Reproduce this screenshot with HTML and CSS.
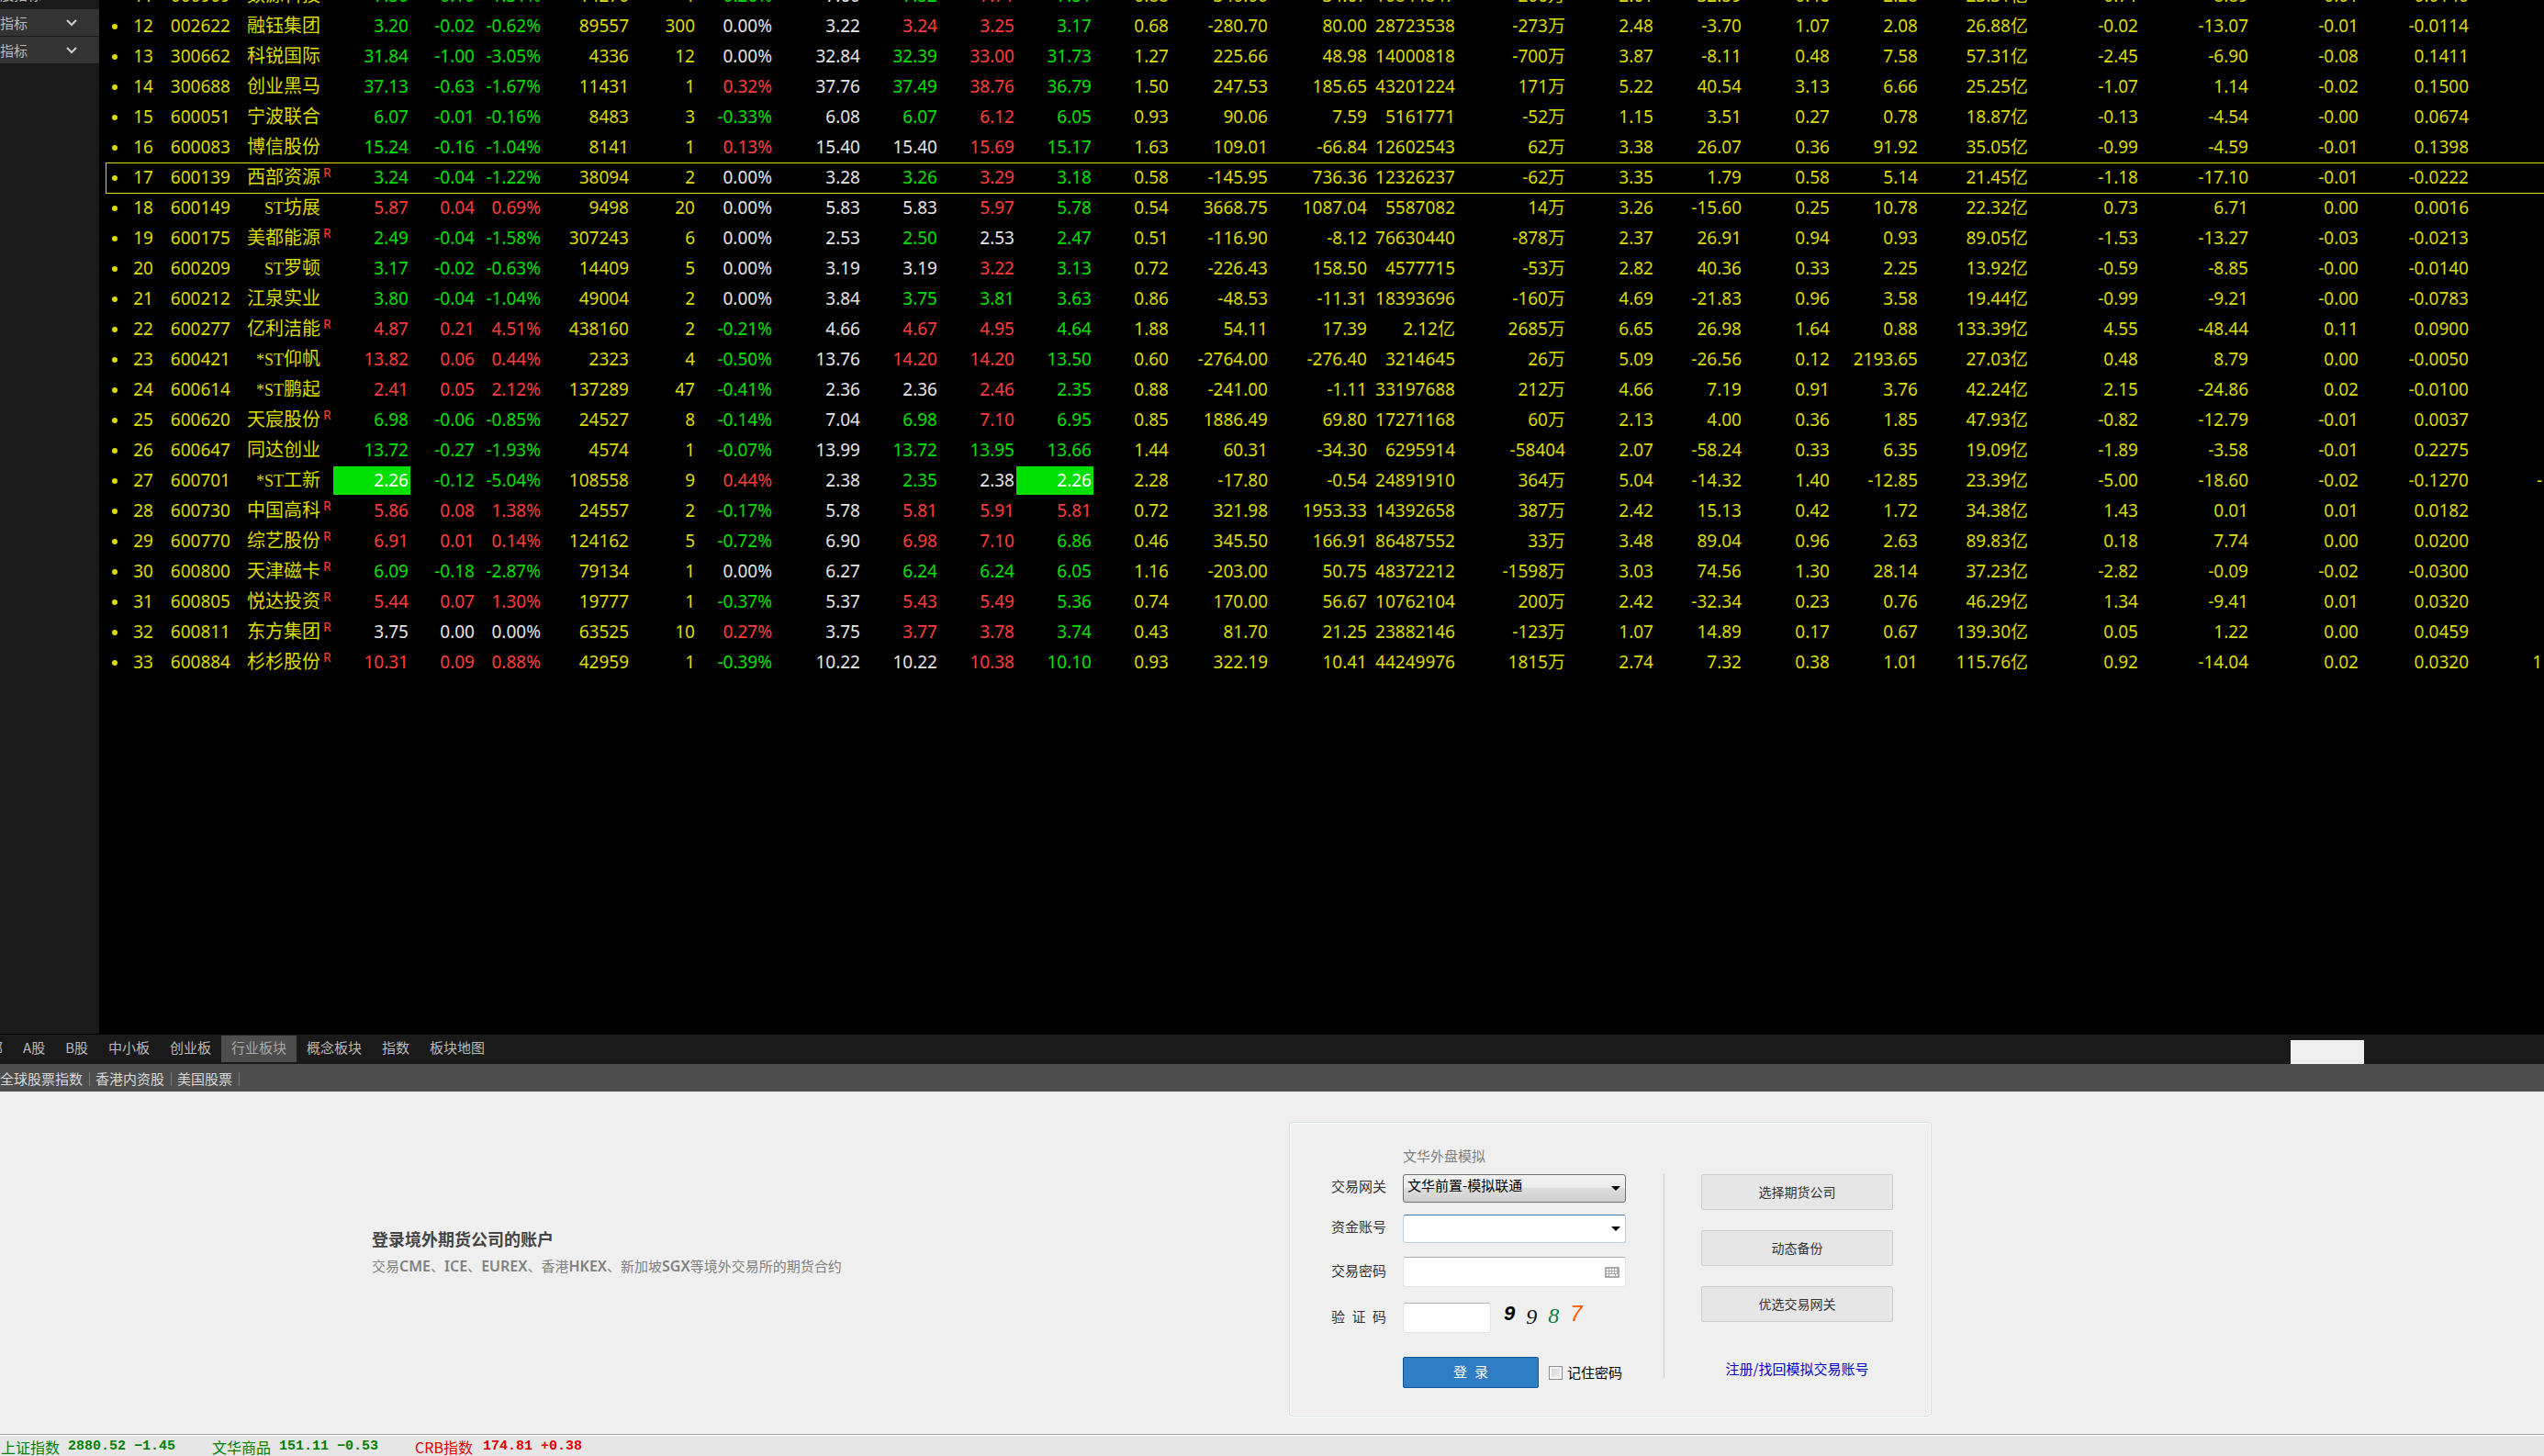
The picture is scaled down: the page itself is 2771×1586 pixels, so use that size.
FILE: index.html
```html
<!DOCTYPE html>
<html lang="zh-CN">
<head>
<meta charset="utf-8">
<title>行业板块</title>
<link rel="stylesheet" href="styles.css">
</head>
<body>
<main class="workspace">
  <aside class="sidebar">
    <div class="side-heading">股指标</div>
    <button class="side-item" type="button"><span>指标</span><svg class="chevron" viewBox="0 0 12 8"><path d="M1 1l5 5 5-5"/></svg></button>
    <button class="side-item" type="button"><span>指标</span><svg class="chevron" viewBox="0 0 12 8"><path d="M1 1l5 5 5-5"/></svg></button>
  </aside>
  <section class="board">
    <table class="quotes">
      <colgroup>
        <col class="w20"><col class="w34"><col class="w84"><col class="w98"><col class="w12"><col class="w84">
        <col class="w72"><col class="w72"><col class="w96"><col class="w72"><col class="w84"><col class="w96">
        <col class="w84"><col class="w84"><col class="w84"><col class="w84"><col class="w108"><col class="w108">
        <col class="w96"><col class="w120"><col class="w96"><col class="w96"><col class="w96"><col class="w96">
        <col class="w120"><col class="w120"><col class="w120"><col class="w120"><col class="w120"><col>
      </colgroup>
      <tbody id="quotes"></tbody>
    </table>
  </section>
</main>
<nav class="tabs">
  <div class="tab-list">
    <button type="button" class="tab">全部</button>
    <button type="button" class="tab">A股</button>
    <button type="button" class="tab">B股</button>
    <button type="button" class="tab">中小板</button>
    <button type="button" class="tab">创业板</button>
    <button type="button" class="tab active">行业板块</button>
    <button type="button" class="tab">概念板块</button>
    <button type="button" class="tab">指数</button>
    <button type="button" class="tab">板块地图</button>
  </div>
  <div class="tab-blank"></div>
</nav>
<nav class="markets">
  <a href="#">全球股票指数</a>
  <a href="#">香港内资股</a>
  <a href="#">美国股票</a>
</nav>
<section class="login">
  <div class="intro">
    <h1>登录境外期货公司的账户</h1>
    <p>交易<b>CME</b>、<b>ICE</b>、<b>EUREX</b>、香港<b>HKEX</b>、新加坡<b>SGX</b>等境外交易所的期货合约</p>
  </div>
  <div class="card">
    <form class="form">
      <div class="form-title">文华外盘模拟</div>
      <label for="gateway">交易网关</label>
      <div class="field">
        <select id="gateway" class="gateway"><option>文华前置-模拟联通</option></select>
        <svg class="arrow" viewBox="0 0 10 5"><path d="M0 0h10L5 5z"/></svg>
      </div>
      <label for="account">资金账号</label>
      <div class="field">
        <input id="account" class="account" type="text">
        <svg class="arrow" viewBox="0 0 10 5"><path d="M0 0h10L5 5z"/></svg>
      </div>
      <label for="password" class="tall">交易密码</label>
      <div class="field">
        <input id="password" class="text" type="password">
        <svg class="keyboard" viewBox="0 0 16 12"><rect width="16" height="12" rx="1" fill="#aaa"/><path d="M2 3h12M2 6h12" stroke="#fff" stroke-width="2" stroke-dasharray="2 1"/><path d="M2 9h2M5 9h6M12 9h2" stroke="#fff" stroke-width="2"/></svg>
      </div>
      <label for="code" class="tall spread"><span>验</span><span>证</span><span>码</span></label>
      <div class="field code-row">
        <input id="code" class="text code" type="text">
        <div class="captcha"><span class="c1">9</span><span class="c2">9</span><span class="c3">8</span><span class="c4">7</span></div>
      </div>
      <div class="submit-row">
        <button type="submit" class="submit"><span>登</span><span>录</span></button>
        <label class="remember"><input type="checkbox">记住密码</label>
      </div>
    </form>
    <div class="actions">
      <button type="button">选择期货公司</button>
      <button type="button">动态备份</button>
      <button type="button">优选交易网关</button>
      <a href="#">注册/找回模拟交易账号</a>
    </div>
  </div>
</section>
<footer class="status">
  <div class="index down"><span>上证指数</span><b>2880.52</b><b>−1.45</b></div>
  <div class="index down"><span>文华商品</span><b>151.11</b><b>−0.53</b></div>
  <div class="index up"><span class="wide">CRB指数</span><b>174.81</b><b>+0.38</b></div>
</footer>
<script src="quotes.js"></script>
</body>
</html>
```
FILE: styles.css
```css
* { box-sizing: border-box; }
body {
  margin: 0;
  height: 100vh;
  display: flex;
  flex-direction: column;
  overflow: hidden;
  background: #efefef;
  font: 15px/20px "Noto Sans CJK SC", sans-serif;
}
button, input, select { font: inherit; margin: 0; }
button { cursor: pointer; }

/* quote board */
.workspace {
  flex: 1 1 0;
  min-height: 0;
  display: flex;
  overflow: hidden;
  background: #000;
}
.sidebar {
  flex: none;
  width: 108px;
  margin-bottom: 1px;
  background: #1a1a1a;
  color: #bbb;
  overflow: hidden;
}
.side-heading {
  height: 20px;
  margin-top: -14px;
  margin-bottom: 4px;
  line-height: 16px;
}
.side-item {
  display: flex;
  align-items: center;
  width: 100%;
  height: 29px;
  margin-bottom: 1px;
  padding: 0;
  border: 0;
  background: #333;
  color: #bbb;
}
.side-item span { width: 72px; text-align: left; }
.chevron {
  width: 12px;
  height: 8px;
  fill: none;
  stroke: #ccc;
  stroke-width: 2;
}
.board { flex: 1; min-width: 0; padding-left: 7px; overflow: hidden; }
.quotes {
  width: 100%;
  margin-top: -21px;
  table-layout: fixed;
  border-collapse: separate;
  border-spacing: 0;
  font: 19px/31px "Noto Sans", "Noto Sans CJK SC", sans-serif;
  color: #dcdc00;
}
.w12 { width: 12px; } .w20 { width: 20px; } .w34 { width: 34px; } .w72 { width: 72px; }
.w84 { width: 84px; } .w96 { width: 96px; } .w98 { width: 98px; }
.w108 { width: 108px; } .w120 { width: 120px; }
.quotes td {
  height: 33px;
  padding: 1px 2px 1px 0;
  text-align: right;
  white-space: nowrap;
  vertical-align: top;
}
.quotes td > span { display: block; height: 31px; padding-right: 2px; margin-right: -2px; }
.quotes .name { font-family: "Liberation Serif", "Noto Sans CJK SC", serif; font-size: 20px; }
.quotes .name small { font-size: 18px; }
.quotes .flag { padding: 2px 0 0 1px; font-size: 14px; line-height: 18px; text-align: left; color: #ff3c3c; }
.quotes .dot { text-align: center; padding: 14px 0 0; }
.quotes .dot i { display: block; width: 6px; height: 6px; margin: 0 auto; border-radius: 3px; background: #dcdc00; }
.quotes .up { color: #ff3c3c; }
.quotes .down { color: #00e000; }
.quotes .flat { color: #e6e6e6; }
.quotes .limit span { background: #00e000; color: #fff; }
.quotes .selected td { box-shadow: inset 0 1px #dcdc00, 0 1px #dcdc00; }
.quotes .selected .dot { box-shadow: inset 0 1px #dcdc00, 0 1px #dcdc00, inset 1px 0 #dcdc00; }

/* tab bars */
.tabs {
  flex: none;
  display: flex;
  justify-content: space-between;
  height: 32px;
  padding-right: 196px;
  background: #1a1a1a;
  overflow: hidden;
}
.tab-list { display: flex; margin-left: -38px; padding: 1px 0 2px; }
.tab {
  padding: 0 11px 3px;
  border: 0;
  background: none;
  color: #bbb;
  line-height: 24px;
  white-space: nowrap;
}
.tab.active { background: #4d4d4d; color: #aaa; }
.tab-blank { width: 80px; margin-top: 6px; background: #efefef; }
.markets {
  flex: none;
  display: flex;
  align-items: center;
  height: 30px;
  padding-top: 2px;
  background: #4d4d4d;
}
.markets a {
  height: 15px;
  margin-right: 6px;
  padding-right: 7px;
  border-right: 1px solid #777;
  color: #d8d8d8;
  line-height: 14px;
  text-decoration: none;
}

/* login */
.login {
  flex: none;
  display: grid;
  grid-template-columns: 1fr 700px;
  padding: 33px 667px 19px 405px;
}
.intro { padding-top: 114px; }
.intro h1 { margin: 0 0 7px; font-size: 18px; line-height: 26px; color: #444; }
.intro p { margin: 0; color: #808080; }
.intro b { font: 600 16px/20px "Noto Sans", sans-serif; }
.card {
  display: flex;
  height: 321px;
  padding: 24px 0 0 45px;
  border: 1px solid #d5dfe5;
  border-radius: 4px;
  box-shadow: inset 0 0 0 1px #fff, 0 1px #fff;
  color: #333;
}
.form {
  display: grid;
  grid-template-columns: 60px 243px;
  grid-template-rows: 32px 44px 46px 50px 59px 34px;
  column-gap: 18px;
  align-items: start;
}
.form > label { line-height: 26px; }
.form > .tall { line-height: 30px; }
.form-title { grid-column: 2; line-height: 24px; color: #808080; }
.spread { display: flex; justify-content: space-between; }
.field { position: relative; }
.gateway, .account, .text { display: block; width: 100%; border-radius: 3px; outline: 0; }
.gateway {
  height: 31px;
  padding: 0 24px 8px 4px;
  appearance: none;
  border: 1px solid #707070;
  background: linear-gradient(#f2f2f2, #ebebeb 50%, #ddd 50%, #cfcfcf);
  color: #000;
}
.account { height: 31px; padding: 0 24px 0 4px; border: 1px solid #b5cfe7; border-top-color: #3d7bad; background: #fff; }
.text { height: 33px; padding: 0 4px; border: 1px solid #e2e3ea; border-top-color: #abadb3; background: #fff; }
.arrow { position: absolute; right: 6px; top: 13px; width: 10px; height: 5px; }
.keyboard { position: absolute; right: 7px; top: 11px; width: 16px; height: 12px; }
.code-row { display: flex; gap: 14px; }
.code-row .code { flex: none; width: 96px; }
.captcha { display: flex; gap: 12px; font: italic 24px/30px "Liberation Serif", serif; }
.c1 { font: italic bold 22px/24px "Liberation Sans", sans-serif; color: #000; }
.c2 { color: #111; }
.c3 { color: #108040; line-height: 28px; }
.c4 { font: italic 24px/24px "Liberation Sans", sans-serif; color: #ff5a00; }
.submit-row { grid-column: 2; display: flex; align-items: center; gap: 11px; }
.submit {
  display: flex;
  justify-content: center;
  gap: 8px;
  width: 148px;
  height: 34px;
  padding: 5px 0;
  border: 1px solid #0e5698;
  border-radius: 2px;
  background: #2f7dc3;
  color: #fff;
}
.remember { display: flex; align-items: center; gap: 5px; color: #000; white-space: nowrap; }
.remember input {
  appearance: none;
  width: 15px;
  height: 15px;
  border: 1px solid #8e8f8f;
  background: linear-gradient(135deg, #c8ccd2, #f6f6f6);
  box-shadow: inset 0 0 0 2px #f4f4f4;
}
.actions {
  display: flex;
  flex-direction: column;
  align-items: center;
  gap: 22px;
  height: 222px;
  margin: 32px 0 0 41px;
  padding-left: 40px;
  border-left: 1px solid #ccc;
}
.actions button {
  width: 209px;
  height: 39px;
  padding-bottom: 3px;
  border: 1px solid #ccc;
  border-radius: 2px;
  background: #e6e6e6;
  color: #333;
  font-size: 14px;
}
.actions a { margin-top: 19px; color: #0000c8; text-decoration: none; }

/* status bar */
.status {
  flex: none;
  display: flex;
  align-items: flex-end;
  gap: 40px;
  height: 24px;
  padding-left: 1px;
  border-top: 1px solid #a0a0a0;
  box-shadow: inset 0 1px #fff;
  background: #e6e6e6;
  font-size: 16px;
  line-height: 20px;
  overflow: hidden;
}
.index { display: flex; gap: 9px; white-space: nowrap; }
.index b { font: bold 15px/20px "Liberation Mono", monospace; }
.index.down { color: #008000; }
.index.up { color: #e00000; }
.wide { width: 65px; }
```
FILE: quotes.js
```js
// 序号 代码 名称 R标记 现价 涨跌 涨幅 总量 现量 涨速 昨收 今开 最高 最低 其余指标…
const data = `
11 000909 数源科技 - 7.50 -0.10 -1.31% 14270 1 -0.26% 7.60 7.52 7.71 7.51 0.88 -340.00 34.67 10844847 -206万 2.61 -32.59 0.46 2.28 23.31亿 -0.71 -8.89 -0.01 -0.0140
12 002622 融钰集团 - 3.20 -0.02 -0.62% 89557 300 0.00% 3.22 3.24 3.25 3.17 0.68 -280.70 80.00 28723538 -273万 2.48 -3.70 1.07 2.08 26.88亿 -0.02 -13.07 -0.01 -0.0114
13 300662 科锐国际 - 31.84 -1.00 -3.05% 4336 12 0.00% 32.84 32.39 33.00 31.73 1.27 225.66 48.98 14000818 -700万 3.87 -8.11 0.48 7.58 57.31亿 -2.45 -6.90 -0.08 0.1411
14 300688 创业黑马 - 37.13 -0.63 -1.67% 11431 1 0.32% 37.76 37.49 38.76 36.79 1.50 247.53 185.65 43201224 171万 5.22 40.54 3.13 6.66 25.25亿 -1.07 1.14 -0.02 0.1500
15 600051 宁波联合 - 6.07 -0.01 -0.16% 8483 3 -0.33% 6.08 6.07 6.12 6.05 0.93 90.06 7.59 5161771 -52万 1.15 3.51 0.27 0.78 18.87亿 -0.13 -4.54 -0.00 0.0674
16 600083 博信股份 - 15.24 -0.16 -1.04% 8141 1 0.13% 15.40 15.40 15.69 15.17 1.63 109.01 -66.84 12602543 62万 3.38 26.07 0.36 91.92 35.05亿 -0.99 -4.59 -0.01 0.1398
17 600139 西部资源 R 3.24 -0.04 -1.22% 38094 2 0.00% 3.28 3.26 3.29 3.18 0.58 -145.95 736.36 12326237 -62万 3.35 1.79 0.58 5.14 21.45亿 -1.18 -17.10 -0.01 -0.0222
18 600149 ST坊展 - 5.87 0.04 0.69% 9498 20 0.00% 5.83 5.83 5.97 5.78 0.54 3668.75 1087.04 5587082 14万 3.26 -15.60 0.25 10.78 22.32亿 0.73 6.71 0.00 0.0016
19 600175 美都能源 R 2.49 -0.04 -1.58% 307243 6 0.00% 2.53 2.50 2.53 2.47 0.51 -116.90 -8.12 76630440 -878万 2.37 26.91 0.94 0.93 89.05亿 -1.53 -13.27 -0.03 -0.0213
20 600209 ST罗顿 - 3.17 -0.02 -0.63% 14409 5 0.00% 3.19 3.19 3.22 3.13 0.72 -226.43 158.50 4577715 -53万 2.82 40.36 0.33 2.25 13.92亿 -0.59 -8.85 -0.00 -0.0140
21 600212 江泉实业 - 3.80 -0.04 -1.04% 49004 2 0.00% 3.84 3.75 3.81 3.63 0.86 -48.53 -11.31 18393696 -160万 4.69 -21.83 0.96 3.58 19.44亿 -0.99 -9.21 -0.00 -0.0783
22 600277 亿利洁能 R 4.87 0.21 4.51% 438160 2 -0.21% 4.66 4.67 4.95 4.64 1.88 54.11 17.39 2.12亿 2685万 6.65 26.98 1.64 0.88 133.39亿 4.55 -48.44 0.11 0.0900
23 600421 *ST仰帆 - 13.82 0.06 0.44% 2323 4 -0.50% 13.76 14.20 14.20 13.50 0.60 -2764.00 -276.40 3214645 26万 5.09 -26.56 0.12 2193.65 27.03亿 0.48 8.79 0.00 -0.0050
24 600614 *ST鹏起 - 2.41 0.05 2.12% 137289 47 -0.41% 2.36 2.36 2.46 2.35 0.88 -241.00 -1.11 33197688 212万 4.66 7.19 0.91 3.76 42.24亿 2.15 -24.86 0.02 -0.0100
25 600620 天宸股份 R 6.98 -0.06 -0.85% 24527 8 -0.14% 7.04 6.98 7.10 6.95 0.85 1886.49 69.80 17271168 60万 2.13 4.00 0.36 1.85 47.93亿 -0.82 -12.79 -0.01 0.0037
26 600647 同达创业 - 13.72 -0.27 -1.93% 4574 1 -0.07% 13.99 13.72 13.95 13.66 1.44 60.31 -34.30 6295914 -58404 2.07 -58.24 0.33 6.35 19.09亿 -1.89 -3.58 -0.01 0.2275
27 600701 *ST工新 - 2.26 -0.12 -5.04% 108558 9 0.44% 2.38 2.35 2.38 2.26 2.28 -17.80 -0.54 24891910 364万 5.04 -14.32 1.40 -12.85 23.39亿 -5.00 -18.60 -0.02 -0.1270 -
28 600730 中国高科 R 5.86 0.08 1.38% 24557 2 -0.17% 5.78 5.81 5.91 5.81 0.72 321.98 1953.33 14392658 387万 2.42 15.13 0.42 1.72 34.38亿 1.43 0.01 0.01 0.0182
29 600770 综艺股份 R 6.91 0.01 0.14% 124162 5 -0.72% 6.90 6.98 7.10 6.86 0.46 345.50 166.91 86487552 33万 3.48 89.04 0.96 2.63 89.83亿 0.18 7.74 0.00 0.0200
30 600800 天津磁卡 R 6.09 -0.18 -2.87% 79134 1 0.00% 6.27 6.24 6.24 6.05 1.16 -203.00 50.75 48372212 -1598万 3.03 74.56 1.30 28.14 37.23亿 -2.82 -0.09 -0.02 -0.0300
31 600805 悦达投资 R 5.44 0.07 1.30% 19777 1 -0.37% 5.37 5.43 5.49 5.36 0.74 170.00 56.67 10762104 200万 2.42 -32.34 0.23 0.76 46.29亿 1.34 -9.41 0.01 0.0320
32 600811 东方集团 R 3.75 0.00 0.00% 63525 10 0.27% 3.75 3.77 3.78 3.74 0.43 81.70 21.25 23882146 -123万 1.07 14.89 0.17 0.67 139.30亿 0.05 1.22 0.00 0.0459
33 600884 杉杉股份 R 10.31 0.09 0.88% 42959 1 -0.39% 10.22 10.22 10.38 10.10 0.93 322.19 10.41 44249976 1815万 2.74 7.32 0.38 1.01 115.76亿 0.92 -14.04 0.02 0.0320 1
`;
const SELECTED = '600139';
const LIMIT = -5;
const tone = n => n > 0 ? 'up' : n < 0 ? 'down' : 'flat';

document.getElementById('quotes').innerHTML = data.trim().split('\n').map(line => {
  const f = line.split(' ');
  const prev = parseFloat(f[10]);
  const atLimit = parseFloat(f[6]) <= LIMIT;
  const cells = f.map((value, i) => {
    let cls = '', text = value;
    if (i === 2) {
      cls = 'name';
      text = value.replace(/^\*?ST/, m => `<small>${m}</small>`);
    } else if (i === 3) {
      cls = 'flag';
      text = value === 'R' ? 'R' : '';
      return `<td class="${cls}">${text}</td>`;
    } else if (i === 5 || i === 6 || i === 9) {
      cls = tone(parseFloat(value));
    } else if (i === 10) {
      cls = 'flat';
    } else if (i === 4 || (i > 10 && i < 14)) {
      cls = tone(parseFloat(value) - prev);
      if (atLimit && value === f[4]) cls += ' limit';
    }
    return `<td class="${cls}"><span>${text}</span></td>`;
  });
  while (cells.length < 29) cells.push('<td></td>');
  return `<tr class="${f[1] === SELECTED ? 'selected' : ''}"><td class="dot"><i></i></td>${cells.join('')}</tr>`;
}).join('');
```
